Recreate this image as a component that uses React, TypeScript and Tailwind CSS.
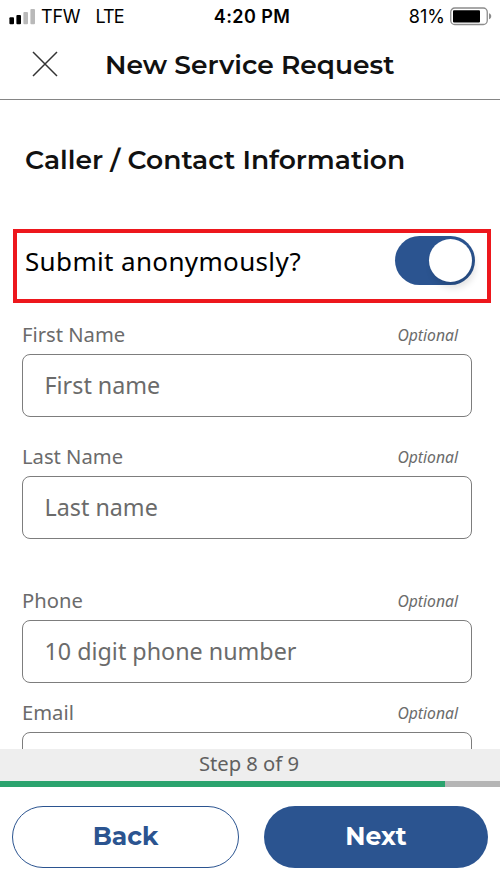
import { clsx } from "clsx";

type FieldProps = {
  label: string;
  placeholder?: string;
  className?: string;
};

function SignalIcon() {
  return (
    <svg width="27" height="17" viewBox="0 0 27 17" className="shrink-0">
      <rect x="0.4" y="9.2" width="4.6" height="7" rx="1" fill="#000" />
      <rect x="7.4" y="7" width="4.6" height="9.2" rx="1" fill="#000" />
      <rect x="14.4" y="4" width="4.6" height="12.2" rx="1" fill="#b9b9b9" />
      <rect x="21.4" y="1" width="4.6" height="15.2" rx="1" fill="#b9b9b9" />
    </svg>
  );
}

function BatteryIcon() {
  return (
    <svg width="42" height="19" viewBox="0 0 42 19" className="shrink-0">
      <rect
        x="0.75"
        y="1"
        width="36.5"
        height="16.5"
        rx="4"
        fill="none"
        stroke="#8c8c8c"
        strokeWidth="1.3"
      />
      <rect x="3" y="3.2" width="27" height="12.3" rx="1" fill="#000" />
      <path d="M39 6.3c3 1 3 5 0 6z" fill="#8c8c8c" />
    </svg>
  );
}

function Field({ label, placeholder, className }: FieldProps) {
  return (
    <div className={clsx("shrink-0 text-[#6b6b6b]", className)}>
      <div className="flex h-[38px] items-center justify-between pr-[14px]">
        <label className="pb-px text-[20.2px] leading-none">{label}</label>
        <span className="pt-px text-[15.7px] leading-none italic">Optional</span>
      </div>
      <div className="flex h-[63px] items-center rounded-[8px] border border-[#7d7d7d] pb-px pl-[21.5px] text-[23.3px]">
        {placeholder}
      </div>
    </div>
  );
}

export default function App() {
  return (
    <div className="flex h-[887px] w-[500px] flex-col overflow-hidden bg-white font-['Noto_Sans',sans-serif]">
      <div className="grid h-8 shrink-0 grid-cols-3 items-center pl-[9px] pr-2 font-[Inter,sans-serif] text-[18px] text-black">
        <div className="flex items-center">
          <SignalIcon />
          <span className="ml-[5px] tracking-[-0.2px]">TFW</span>
          <span className="ml-[15px] tracking-[-0.9px]">LTE</span>
        </div>
        <span className="pl-[3px] text-center font-semibold tracking-[0.4px] whitespace-nowrap">
          4:20 PM
        </span>
        <div className="flex items-center justify-end gap-[5px]">
          <span>81%</span>
          <BatteryIcon />
        </div>
      </div>

      <header className="flex h-[68px] shrink-0 items-center border-b border-[#858585] pl-8">
        <svg
          width="26"
          height="26"
          viewBox="0 0 26 26"
          stroke="#333"
          strokeWidth="1.5"
          className="mb-[3px]"
        >
          <path d="M1 1l24 24M25 1L1 25" />
        </svg>
        <h1 className="mb-[2px] ml-[47px] font-[Montserrat,Inter,sans-serif] text-[26.5px] leading-10 font-semibold whitespace-nowrap text-[#111]">
          New Service Request
        </h1>
      </header>

      <main className="flex min-h-0 flex-1 flex-col overflow-hidden">
        <h2 className="mt-10 ml-[25px] h-10 shrink-0 font-[Montserrat,Inter,sans-serif] text-[26.55px] leading-10 font-semibold whitespace-nowrap text-[#111]">
          Caller / Contact Information
        </h2>
        <div className="mt-[49px] mr-[9px] ml-[13px] flex h-[74px] shrink-0 items-start justify-between border-4 border-[#ed171d] pt-[3px] pr-3 pl-2">
          <span className="text-[26px] leading-[50px] tracking-[0.35px] text-black">
            Submit anonymously?
          </span>
          <div className="flex h-[49px] w-20 items-center justify-end rounded-full bg-[#2b5490] pr-[3px]">
            <div className="size-[43px] rounded-full bg-white shadow-[3px_6px_7px_rgba(0,0,0,0.12)]" />
          </div>
        </div>
        <div className="mr-7 ml-[22px] flex flex-col pt-[13px]">
          <Field label="First Name" placeholder="First name" />
          <Field label="Last Name" placeholder="Last name" className="mt-[21px]" />
          <Field label="Phone" placeholder="10 digit phone number" className="mt-[43px]" />
          <Field label="Email" className="mt-[11px]" />
        </div>
      </main>

      <footer className="shrink-0">
        <div className="flex h-8 items-center justify-center bg-[#eee] pr-[2px] pb-[3px] text-[20.2px] text-[#606060]">
          Step 8 of 9
        </div>
        <div className="h-[6px] bg-[#b5b5b5]">
          <div className="h-full w-[445px] bg-[#2ba36e]" />
        </div>
        <div className="flex h-[100px] gap-[25px] pt-[19px] pr-3 pl-[12px] font-[Montserrat,Inter,sans-serif] text-[25px] font-bold">
          <button className="h-[62px] w-[227px] rounded-full border-[1.5px] border-[#2b5490] text-[#2b5490]">
            Back
          </button>
          <button className="h-[62px] w-[224px] rounded-full bg-[#2b5490] text-white">
            Next
          </button>
        </div>
      </footer>
    </div>
  );
}
